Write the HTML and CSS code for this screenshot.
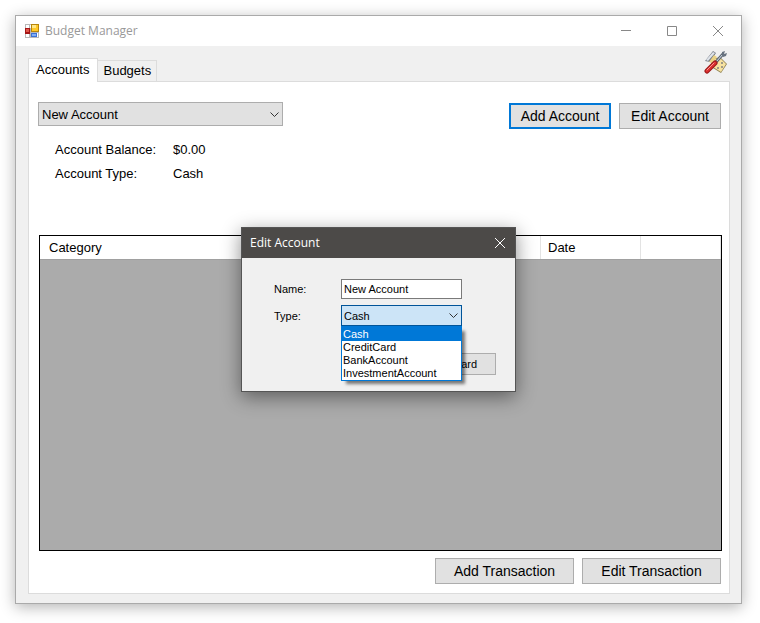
FILE: index.html
```html
<!DOCTYPE html>
<html lang="en">
<head>
<meta charset="utf-8">
<title>Budget Manager</title>
<link rel="stylesheet" href="styles.css">
</head>
<body>
<main class="window">
  <header class="titlebar">
    <svg class="app-icon" width="14" height="14" viewBox="0 0 14 14" shape-rendering="crispEdges" aria-hidden="true">
      <path fill="#b8b8b8" d="M0 0h14v14H0z"/>
      <path fill="#fff" d="M1 1h3v3H1zM5 1h1v3H5zM1 10h3v3H1zM12 9h1v4h-1z"/>
      <path fill="#a51616" d="M0 4h5v6H0z"/><path fill="#e0564a" d="M1 5h3v3H1z"/>
      <path fill="#b8860b" d="M6 0h8v8H6z"/><path fill="#ffc928" d="M7 1h6v6H7z"/><path fill="#ffe88a" d="M7 1h4v3H7z"/>
      <path fill="#3b70d6" d="M6 9h6v4H6z"/><path fill="#80aef5" d="M7 10h4v2H7z"/>
    </svg>
    <h1 class="title">Budget Manager</h1>
    <div class="controls">
      <button type="button" class="control" aria-label="Minimize"><svg width="11" height="11" viewBox="0 0 11 11"><path d="M0 4.500h10"/></svg></button>
      <button type="button" class="control" aria-label="Maximize"><svg width="11" height="11" viewBox="0 0 11 11"><path d="M.5.500h9v9h-9z"/></svg></button>
      <button type="button" class="control" aria-label="Close"><svg width="11" height="11" viewBox="0 0 11 11"><path d="M0 0l10 10M10 0l-10 10"/></svg></button>
    </div>
  </header>

  <div class="form">
    <div class="tab-row">
      <div class="tabs" role="tablist">
        <button type="button" class="tab tab-active" role="tab" aria-selected="true">Accounts</button>
        <button type="button" class="tab" role="tab" aria-selected="false">Budgets</button>
      </div>
      <button type="button" class="tools" aria-label="Settings">
        <svg width="24" height="24" viewBox="0 0 24 24">
          <path d="M6 10l10-3 7 7-6 9-8-5z" fill="#8d8050"/>
          <path d="M7 10l9-2 6 6-5 8-8-5z" fill="#f7e2a0"/>
          <path d="M13 17h2v2h-2zM17 12h2v2h-2zM17 16h2v2h-2z" fill="#a09a88"/>
          <path d="M1 11l8-10 3 2-6 9z" fill="#777d87"/>
          <path d="M2 10l7-8 2 1-7 8z" fill="#dfe4ea"/>
          <path d="M5 12l5-7 3 2-5 6z" fill="#ead284"/>
          <path d="M12 12l7-8" stroke="#5c6672" stroke-width="3"/>
          <path d="M12 12l7-8" stroke="#dbe3ed" stroke-width="1"/>
          <path d="M18 5V2l3-1-1 3 3-1-1 3-3 1z" fill="#68727f"/>
          <path d="M3 21l8-8" stroke="#9a1717" stroke-width="5" stroke-linecap="round"/>
          <path d="M3 21l8-8" stroke="#dc3030" stroke-width="3" stroke-linecap="round"/>
          <path d="M3 20l7-7" stroke="#ff9790" stroke-width="1" stroke-linecap="round"/>
        </svg>
      </button>
    </div>

    <section class="page" role="tabpanel" aria-label="Accounts">
      <div class="toolbar">
        <div class="combo account-combo">
          <select aria-label="Account"><option>New Account</option></select>
          <svg class="chevron" width="9" height="6" viewBox="0 0 9 6"><path d="M.5.500l4 4 4-4"/></svg>
        </div>
        <div class="buttons">
          <button type="button" class="button button-default">Add Account</button>
          <button type="button" class="button">Edit Account</button>
        </div>
      </div>

      <dl class="details">
        <dt>Account Balance:</dt><dd>$0.00</dd>
        <dt>Account Type:</dt><dd>Cash</dd>
      </dl>

      <div class="grid">
        <table>
          <colgroup><col><col class="col-date"><col class="col-last"></colgroup>
          <thead><tr><th scope="col">Category</th><th scope="col">Date</th><td></td></tr></thead>
        </table>
      </div>

      <div class="buttons transaction-buttons">
        <button type="button" class="button button-wide">Add Transaction</button>
        <button type="button" class="button button-wide">Edit Transaction</button>
      </div>
    </section>
  </div>

  <div class="overlay">
    <div class="dialog" role="dialog" aria-labelledby="dialog-title">
      <header class="dialog-bar">
        <h2 class="dialog-title" id="dialog-title">Edit Account</h2>
        <button type="button" class="dialog-close" aria-label="Close"><svg width="11" height="11" viewBox="0 0 11 11"><path d="M0 0l10 10M10 0l-10 10"/></svg></button>
      </header>
      <form class="dialog-form">
        <label for="name">Name:</label>
        <input id="name" type="text" value="New Account">
        <label for="type">Type:</label>
        <div class="combo type-combo">
          <select id="type">
            <option>Cash</option><option>CreditCard</option><option>BankAccount</option><option>InvestmentAccount</option>
          </select>
          <svg class="chevron" width="9" height="6" viewBox="0 0 9 6"><path d="M.5.500l4 4 4-4"/></svg>
          <ul class="menu" role="listbox" aria-label="Type">
            <li role="option" aria-selected="true">Cash</li>
            <li role="option" aria-selected="false">CreditCard</li>
            <li role="option" aria-selected="false">BankAccount</li>
            <li role="option" aria-selected="false">InvestmentAccount</li>
          </ul>
        </div>
        <button type="button" class="discard">Discard</button>
      </form>
    </div>
  </div>
</main>
</body>
</html>
```
FILE: styles.css
```css
* {
  box-sizing: border-box;
}

body {
  display: flex;
  min-height: 100vh;
  margin: 0;
  padding: 15px 18px 19px 15px;
  background: #fff;
  color: #000;
  font: 13px/16px "Liberation Sans", Arial, sans-serif;
}

button,
input,
select {
  margin: 0;
  padding: 0;
  border: 0;
  border-radius: 0;
  background: none;
  color: inherit;
  font: inherit;
}

h1,
h2,
dl,
dd,
ul {
  margin: 0;
  padding: 0;
}

svg {
  display: block;
}

.window {
  position: relative;
  display: flex;
  flex: 1;
  flex-direction: column;
  border: 1px solid #aaa;
  background: #f0f0f0;
  box-shadow: 0 3px 14px rgba(0, 0, 0, 0.3);
}

.titlebar {
  display: flex;
  align-items: center;
  height: 30px;
  padding-left: 9px;
  background: #fff;
}

.title {
  margin-left: 6px;
  color: #999;
  font: 12px/16px "Open Sans", "Noto Sans", sans-serif;
}

.controls {
  display: flex;
  margin-left: auto;
}

.control {
  display: grid;
  place-items: center;
  width: 46px;
  height: 30px;
}

.control path,
.dialog-close path,
.chevron path {
  fill: none;
  stroke: #888;
}

.form {
  display: flex;
  flex: 1;
  flex-direction: column;
  padding: 0 11px 9px 12px;
}

.tab-row {
  display: flex;
  justify-content: space-between;
  height: 36px;
  padding-right: 2px;
}

.tabs {
  display: flex;
  align-items: flex-end;
}

.tab {
  height: 22px;
  padding: 0 5px;
  border: 1px solid #dcdcdc;
  border-left: 0;
}

.tab-active {
  height: 24px;
  padding: 0 8px 2px 7px;
  border-bottom: 0;
  border-left: 1px solid #dcdcdc;
  background: #fff;
}

.tools {
  height: 24px;
  margin-top: 4px;
}

.tab-active,
.tools {
  position: relative;
}

.page {
  display: flex;
  flex: 1;
  flex-direction: column;
  margin-top: -1px;
  padding: 20px 8px 9px 9px;
  border: 1px solid #dcdcdc;
  background: #fff;
}

.toolbar {
  display: flex;
  justify-content: space-between;
}

.combo {
  position: relative;
}

.combo select {
  display: block;
  width: 100%;
  appearance: none;
}

.chevron {
  position: absolute;
  top: 10px;
  right: 4px;
  pointer-events: none;
}

.chevron path {
  stroke: #333;
}

.account-combo {
  width: 245px;
}

.account-combo select {
  height: 24px;
  padding: 1px 3px 0;
  border: 1px solid #adadad;
  background: #e1e1e1;
}

.buttons {
  display: flex;
  gap: 8px;
}

.toolbar .buttons {
  margin-top: 1px;
}

.button {
  width: 102px;
  height: 26px;
  border: 1px solid #adadad;
  background: #e1e1e1;
  font-size: 14px;
}

.button-default {
  border: 2px solid #0078d7;
}

.button-wide {
  width: 139px;
}

.details {
  display: grid;
  grid-template-columns: 118px auto;
  row-gap: 8px;
  margin: 13px 0 53px 17px;
}

.grid {
  flex: 1;
  margin: 0 -1px 7px 1px;
  border: 1px solid #000;
  background: #ababab;
}

.grid table {
  width: 100%;
  border-collapse: collapse;
  table-layout: fixed;
}

.grid th,
.grid td {
  height: 23px;
  padding: 2px 0 0 7px;
  border-right: 1px solid #e3e3e3;
  border-bottom: 1px solid #a0a0a0;
  background: #fff;
  font-weight: normal;
  text-align: left;
}

.grid th:first-child {
  padding-left: 9px;
}

.col-date {
  width: 100px;
}

.col-last {
  width: 80px;
}

.transaction-buttons {
  justify-content: flex-end;
}

.overlay {
  position: absolute;
  inset: 0;
  display: grid;
  place-items: center;
}

.dialog {
  width: 275px;
  border: 1px solid #555;
  background: #f0f0f0;
  box-shadow: 0 5px 18px rgba(0, 0, 0, 0.45);
  font-size: 11px;
}

.dialog-bar {
  display: flex;
  align-items: center;
  justify-content: space-between;
  height: 30px;
  padding: 0 9px 0 8px;
  background: #4c4a48;
  color: #fff;
}

.dialog-title {
  font: 12px/16px "Open Sans", "Noto Sans", sans-serif;
}

.dialog-close path {
  stroke: #fff;
}

.dialog-form {
  display: grid;
  grid-template-columns: 67px 121px 1fr;
  align-items: center;
  row-gap: 6px;
  padding: 21px 19px 16px 32px;
}

.dialog-form label {
  grid-column: 1;
}

.dialog-form input {
  width: 100%;
  height: 20px;
  padding: 0 2px;
  border: 1px solid #7a7a7a;
  background: #fff;
}

.type-combo select {
  height: 21px;
  padding: 0 2px;
  border: 1px solid #005499;
  background: #cce4f7;
}

.type-combo .chevron {
  top: 8px;
}

.menu {
  position: absolute;
  top: 100%;
  left: 0;
  width: 100%;
  border: 1px solid #0078d7;
  background: #fff;
  box-shadow: 4px 4px 3px -1px rgba(0, 0, 0, 0.5);
  line-height: 13px;
  list-style: none;
}

.menu li {
  padding-left: 1px;
}

.menu [aria-selected="true"] {
  padding-top: 1px;
  background: #0078d7;
  color: #fff;
}

.discard {
  grid-column: 1 / -1;
  justify-self: end;
  width: 75px;
  height: 22px;
  margin-top: 21px;
  border: 1px solid #adadad;
  background: #e1e1e1;
}
```
